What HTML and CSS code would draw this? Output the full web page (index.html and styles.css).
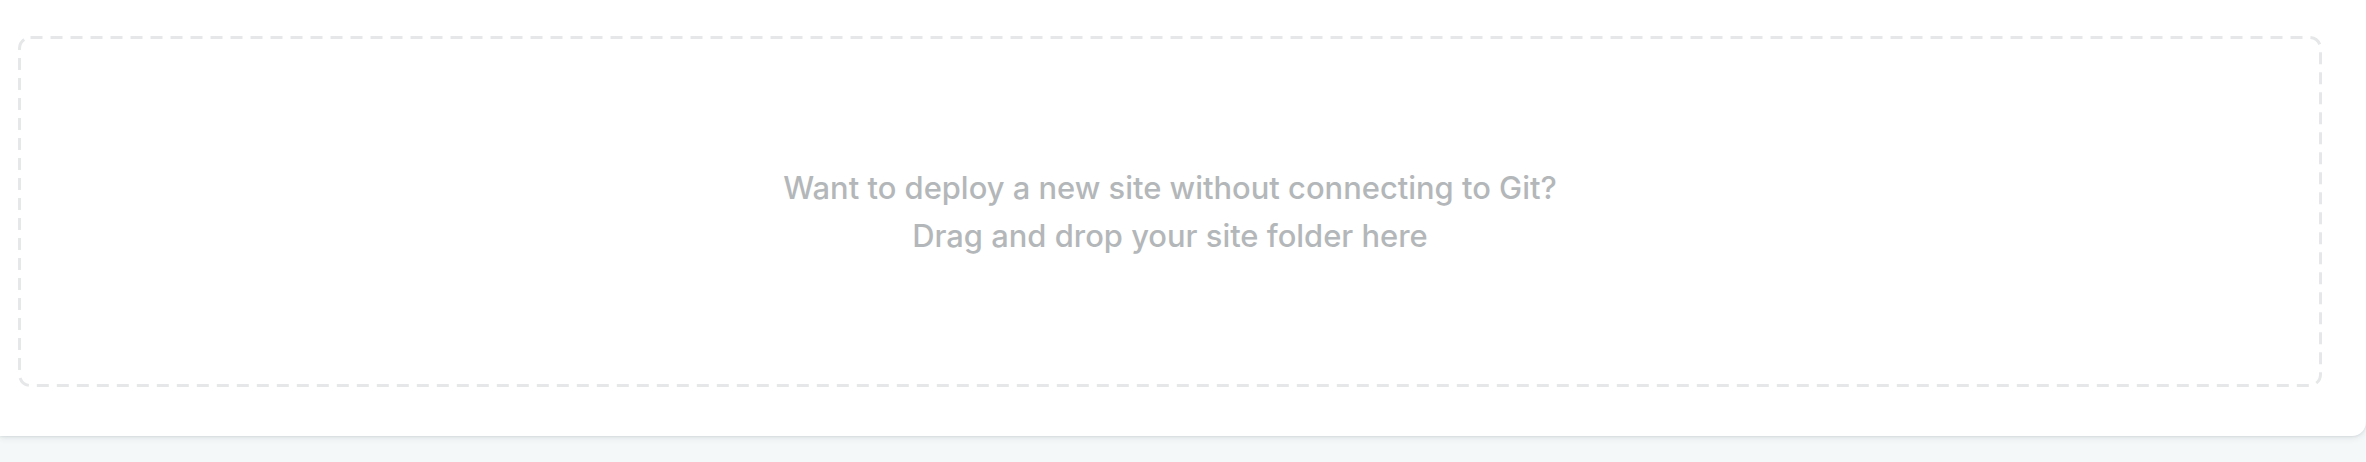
FILE: index.html
```html
<!DOCTYPE html>
<html lang="en">
<head>
<meta charset="utf-8">
<title>Deploy</title>
<link rel="stylesheet" href="styles.css">
</head>
<body>
  <section class="card">
    <div class="dropzone">
      <svg class="dropzone-border" aria-hidden="true"><rect class="dropzone-rect" x="1.5" y="1.5" rx="11" ry="11"></rect></svg>
      <p class="dropzone-text">Want to deploy a new site without connecting to Git?<br>Drag and drop your site folder here</p>
    </div>
  </section>
</body>
</html>
```
FILE: styles.css
```css
html, body {
  margin: 0;
  padding: 0;
}
body {
  background: #f5f8f9;
  font-family: Inter, "Noto Sans", "Liberation Sans", sans-serif;
  height: 462px;
  overflow: hidden;
}
.card {
  box-sizing: border-box;
  width: 2366px;
  height: 436px;
  background: #ffffff;
  border-radius: 0 0 14px 0;
  box-shadow: 0 2px 6px rgba(40, 60, 70, 0.10), 0 1px 2px rgba(40, 60, 70, 0.08);
  padding: 36px 44px 49px 18px;
  display: flex;
}
.dropzone {
  position: relative;
  flex: 1;
  display: flex;
  align-items: center;
  justify-content: center;
}
.dropzone-border {
  position: absolute;
  inset: 0;
  width: 100%;
  height: 100%;
  overflow: visible;
}
.dropzone-rect {
  width: calc(100% - 3px);
  height: calc(100% - 3px);
  fill: none;
  stroke: #e6e7e8;
  stroke-width: 3;
  stroke-dasharray: 12 8;
}
.dropzone-text {
  position: relative;
  margin: 0;
  text-align: center;
  color: #b4b7b9;
  font-size: 30.9px;
  line-height: 48px;
  font-weight: 500;
}
```
